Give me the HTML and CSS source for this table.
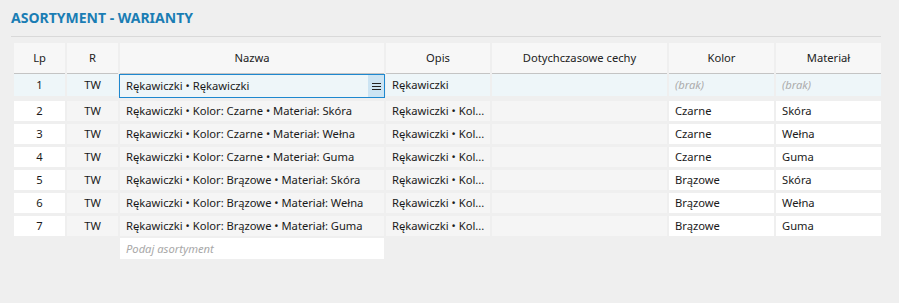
FILE: index.html
```html
<!DOCTYPE html>
<html lang="pl">
  <head>
    <meta charset="UTF-8" />
    <title>Asortyment - warianty</title>
    <link rel="stylesheet" href="styles.css">
  </head>
  <body>
    <div class="page">
      <h2 class="title">ASORTYMENT - WARIANTY</h2>

      <div class="table">
        <div class="row head">
          <div class="cell">Lp</div>
          <div class="cell">R</div>
          <div class="cell">Nazwa</div>
          <div class="cell">Opis</div>
          <div class="cell">Dotychczasowe cechy</div>
          <div class="cell">Kolor</div>
          <div class="cell">Materiał</div>
        </div>

        <div class="row selected">
          <div class="cell center">1</div>
          <div class="cell center">TW</div>
          <div class="cell editor">
            <span class="editor-text">Rękawiczki • Rękawiczki</span>
            <span class="editor-btn">
              <svg width="9" height="8" viewBox="0 0 9 8"><path d="M0 1.5h9M0 4.5h9M0 7.5h9" stroke="#222" stroke-width="1"/></svg>
            </span>
          </div>
          <div class="cell">Rękawiczki</div>
          <div class="cell"></div>
          <div class="cell empty">(brak)</div>
          <div class="cell empty">(brak)</div>
        </div>

        <div class="row">
          <div class="cell center white">2</div>
          <div class="cell center">TW</div>
          <div class="cell">Rękawiczki • Kolor: Czarne • Materiał: Skóra</div>
          <div class="cell">Rękawiczki • Kol...</div>
          <div class="cell"></div>
          <div class="cell white">Czarne</div>
          <div class="cell white">Skóra</div>
        </div>
        <div class="row">
          <div class="cell center white">3</div>
          <div class="cell center">TW</div>
          <div class="cell">Rękawiczki • Kolor: Czarne • Materiał: Wełna</div>
          <div class="cell">Rękawiczki • Kol...</div>
          <div class="cell"></div>
          <div class="cell white">Czarne</div>
          <div class="cell white">Wełna</div>
        </div>
        <div class="row">
          <div class="cell center white">4</div>
          <div class="cell center">TW</div>
          <div class="cell">Rękawiczki • Kolor: Czarne • Materiał: Guma</div>
          <div class="cell">Rękawiczki • Kol...</div>
          <div class="cell"></div>
          <div class="cell white">Czarne</div>
          <div class="cell white">Guma</div>
        </div>
        <div class="row">
          <div class="cell center white">5</div>
          <div class="cell center">TW</div>
          <div class="cell">Rękawiczki • Kolor: Brązowe • Materiał: Skóra</div>
          <div class="cell">Rękawiczki • Kol...</div>
          <div class="cell"></div>
          <div class="cell white">Brązowe</div>
          <div class="cell white">Skóra</div>
        </div>
        <div class="row">
          <div class="cell center white">6</div>
          <div class="cell center">TW</div>
          <div class="cell">Rękawiczki • Kolor: Brązowe • Materiał: Wełna</div>
          <div class="cell">Rękawiczki • Kol...</div>
          <div class="cell"></div>
          <div class="cell white">Brązowe</div>
          <div class="cell white">Wełna</div>
        </div>
        <div class="row">
          <div class="cell center white">7</div>
          <div class="cell center">TW</div>
          <div class="cell">Rękawiczki • Kolor: Brązowe • Materiał: Guma</div>
          <div class="cell">Rękawiczki • Kol...</div>
          <div class="cell"></div>
          <div class="cell white">Brązowe</div>
          <div class="cell white">Guma</div>
        </div>

        <div class="row new">
          <div></div>
          <div></div>
          <div class="cell white placeholder">Podaj asortyment</div>
        </div>
      </div>
    </div>
  </body>
</html>
```

FILE: styles.css
```css
body {
  margin: 0;
  background-color: #efefef;
  font-family: "Noto Sans", "Open Sans", sans-serif;
  font-size: 11.2px;
  color: #1a1a1a;
}

.page {
  padding: 8px 18px 0 11px;
}

.title {
  margin: 0;
  padding-bottom: 8px;
  border-bottom: 1px solid #d9d9d9;
  font-size: 14px;
  line-height: 20px;
  font-weight: bold;
  color: #1a7db4;
}

.table {
  margin: 6px 0 0 3px;
}

.row {
  display: grid;
  grid-template-columns: 51px 51px 264px 104px 175px 105px 105px;
  column-gap: 2px;
  margin-top: 3px;
}

.cell {
  background-color: #f5f5f5;
  height: 20px;
  line-height: 20px;
  padding: 0 6px;
  white-space: nowrap;
  overflow: hidden;
}

.center {
  text-align: center;
}

.white {
  background-color: #ffffff;
}

/* header */
.head {
  margin-top: 0;
}

.head .cell {
  height: 30px;
  line-height: 30px;
  text-align: center;
  background-color: #f7f7f7;
  border-bottom: 1px solid #c4c4c4;
  color: #222;
}

/* selected row */
.selected {
  margin-top: 0;
}

.selected .cell {
  height: 22px;
  line-height: 22px;
  background-color: #eef6f9;
}

.selected .editor {
  display: flex;
  padding: 0;
  border: 1px solid #1e88cf;
  height: 22px;
  line-height: 22px;
  margin: 0 -1px 0 -1px;
}

.editor-text {
  flex: 1;
  padding-left: 6px;
}

.editor-btn {
  width: 16px;
  background-color: #cce4f3;
  display: flex;
  align-items: center;
  justify-content: center;
}

.empty {
  font-style: italic;
  color: #ababab;
}

.new {
  margin-top: 2px;
}

.new .cell {
  height: 21px;
  line-height: 21px;
}

.placeholder {
  font-style: italic;
  color: #a8a8a8;
}
```
